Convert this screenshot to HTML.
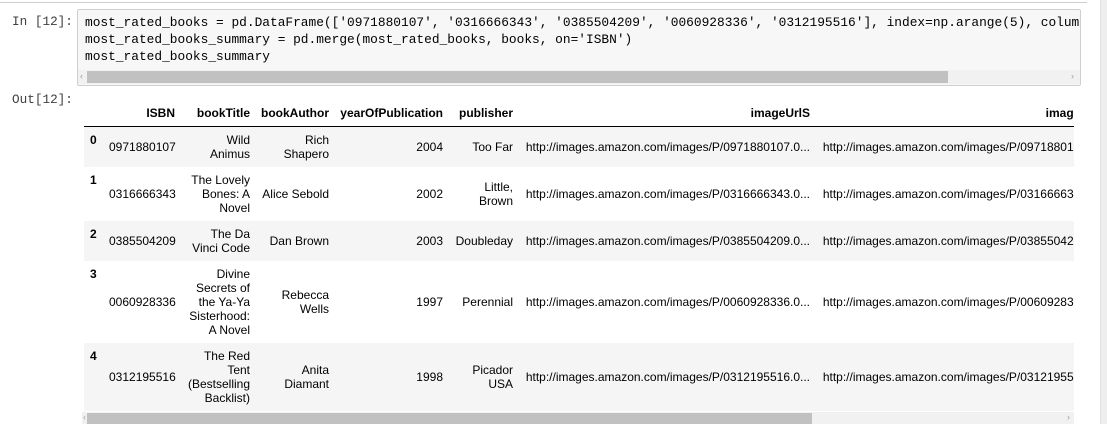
<!DOCTYPE html>
<html><head><style>
body{margin:0;width:1107px;height:424px;overflow:hidden;background:#fff;position:relative;font-family:"Liberation Sans",Arial,sans-serif;}
.topline{position:absolute;left:0;top:2px;width:1087px;height:1px;background:#cfcfcf;}
.rs{position:absolute;left:1100px;top:0;width:7px;height:424px;background:#eeeeee;border-left:1px solid #e0e0e0;}
.prompt{position:absolute;font-family:"Liberation Mono",monospace;font-size:12.7px;color:#404040;}
.inbox{position:absolute;left:77px;top:9px;width:1002px;height:75px;background:#f7f7f7;border:1px solid #cfcfcf;border-radius:2px;overflow:hidden;}
.code{position:absolute;left:7px;top:4px;font-family:"Liberation Mono",monospace;font-size:12.85px;line-height:17px;white-space:pre;color:#000;}
.sb{position:absolute;background:#f1f1f1;}
.thumb{position:absolute;background:#c1c1c1;}
.arr{position:absolute;font-size:9px;color:#a0a0a0;font-family:"Liberation Sans",sans-serif;}
.tw{position:absolute;left:84px;top:100px;width:990px;height:312px;overflow:hidden;}
table{border-collapse:collapse;font-size:12px;color:#000;white-space:nowrap;table-layout:fixed;width:1028px;}
th{font-weight:bold;text-align:right;padding:6px 5px 6px 5px;line-height:14px;border-bottom:1px solid #000;vertical-align:middle;overflow:hidden;}
td{text-align:right;padding:6px 5px 6px 5px;line-height:14px;vertical-align:middle;overflow:hidden;}
td.i{font-weight:bold;text-align:left;vertical-align:top;padding-left:6px;}
tr.g td{background:#f5f5f5;}
</style></head><body>
<div class="topline"></div>
<div class="rs"></div>
<div class="prompt" style="left:12px;top:14px;">In [12]:</div>
<div class="inbox">
<div class="code">most_rated_books = pd.DataFrame(['0971880107', '0316666343', '0385504209', '0060928336', '0312195516'], index=np.arange(5), columns=['ISBN'])
most_rated_books_summary = pd.merge(most_rated_books, books, on='ISBN')
most_rated_books_summary</div>
<div class="sb" style="left:0;top:60px;width:1002px;height:14px;"></div>
<div class="thumb" style="left:9px;top:61px;width:861px;height:12px;"></div>
<div class="arr" style="left:2px;top:61px;">‹</div>
<div class="arr" style="left:993px;top:61px;">›</div>
</div>
<div class="prompt" style="left:12px;top:92px;">Out[12]:</div>
<div class="tw">
<table>
<colgroup><col style="width:20px"><col style="width:76px"><col style="width:75px"><col style="width:79px"><col style="width:114px"><col style="width:70px"><col style="width:297px"><col style="width:297px"></colgroup>
<tr><th></th><th>ISBN</th><th>bookTitle</th><th>bookAuthor</th><th>yearOfPublication</th><th>publisher</th><th>imageUrlS</th><th>imageUrlM</th></tr>
<tr class="g"><td class="i">0</td><td>0971880107</td><td>Wild<br>Animus</td><td>Rich<br>Shapero</td><td>2004</td><td>Too Far</td><td>http://images.amazon.com/images/P/0971880107.0...</td><td>http://images.amazon.com/images/P/0971880107.0...</td></tr>
<tr><td class="i">1</td><td>0316666343</td><td>The Lovely<br>Bones: A<br>Novel</td><td>Alice Sebold</td><td>2002</td><td>Little,<br>Brown</td><td>http://images.amazon.com/images/P/0316666343.0...</td><td>http://images.amazon.com/images/P/0316666343.0...</td></tr>
<tr class="g"><td class="i">2</td><td>0385504209</td><td>The Da<br>Vinci Code</td><td>Dan Brown</td><td>2003</td><td>Doubleday</td><td>http://images.amazon.com/images/P/0385504209.0...</td><td>http://images.amazon.com/images/P/0385504209.0...</td></tr>
<tr><td class="i">3</td><td>0060928336</td><td>Divine<br>Secrets of<br>the Ya-Ya<br>Sisterhood:<br>A Novel</td><td>Rebecca<br>Wells</td><td>1997</td><td>Perennial</td><td>http://images.amazon.com/images/P/0060928336.0...</td><td>http://images.amazon.com/images/P/0060928336.0...</td></tr>
<tr class="g"><td class="i">4</td><td>0312195516</td><td>The Red<br>Tent<br>(Bestselling<br>Backlist)</td><td>Anita<br>Diamant</td><td>1998</td><td>Picador<br>USA</td><td>http://images.amazon.com/images/P/0312195516.0...</td><td>http://images.amazon.com/images/P/0312195516.0...</td></tr>
</table>
</div>
<div class="sb" style="left:82px;top:412px;width:992px;height:12px;"></div>
<div class="thumb" style="left:87px;top:413px;width:725px;height:11px;"></div>
<div class="arr" style="left:83px;top:412px;">‹</div>
<div class="arr" style="left:1067px;top:412px;">›</div>
</body></html>
